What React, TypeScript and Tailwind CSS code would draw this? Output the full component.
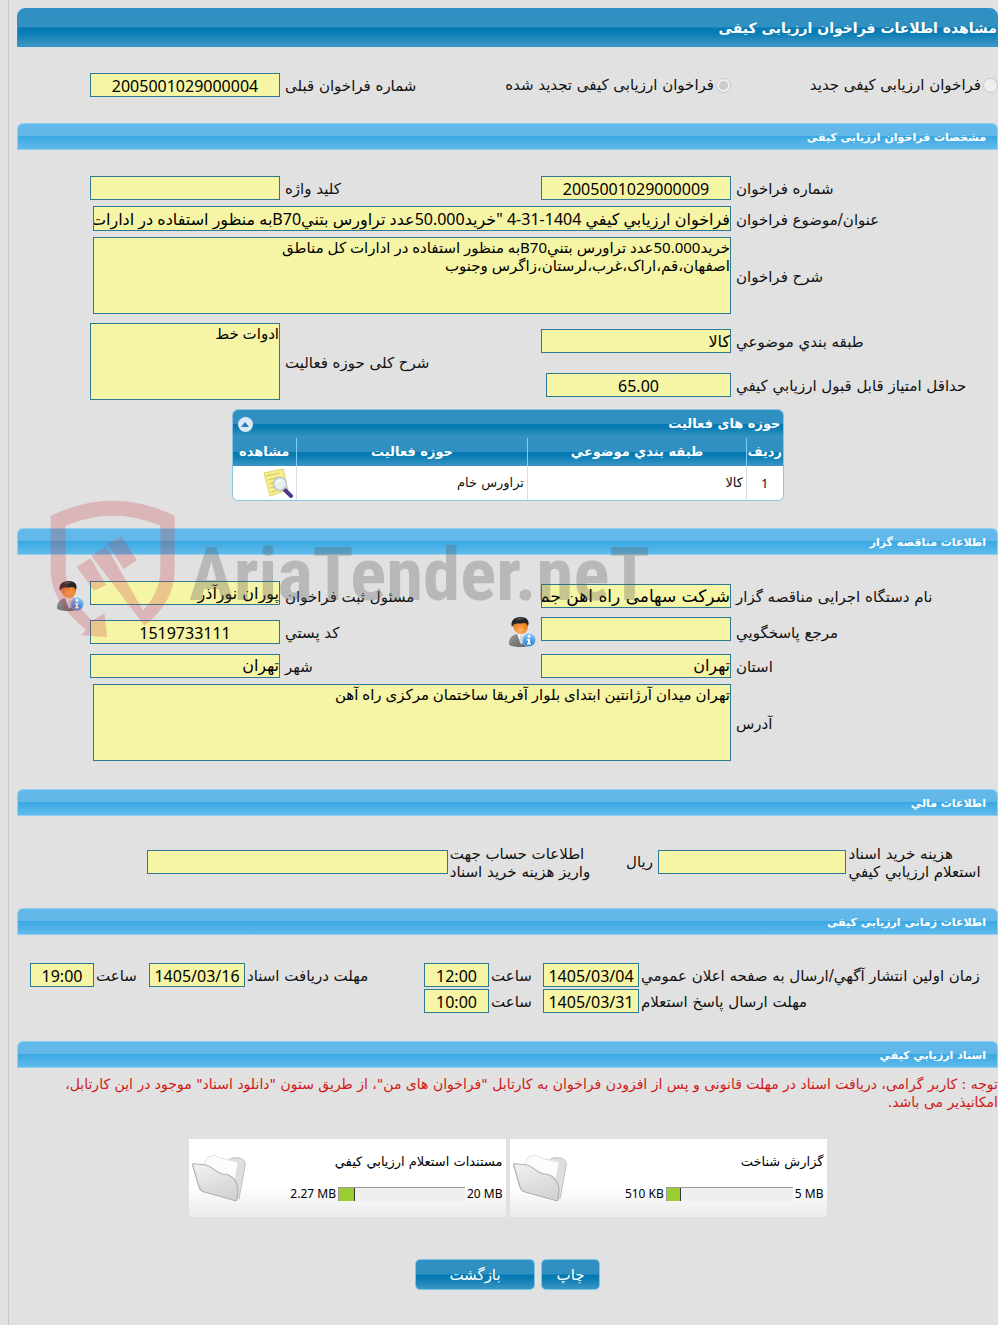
import type { ComponentProps, ReactNode } from 'react';
import { clsx } from 'clsx';

const fieldStyle =
  "block w-full min-w-0 rounded-none border border-[#2b7a91] bg-[#f6f4a5] text-black outline-none";

const fieldSizes = {
  numeric: "h-6 pt-[2px] text-center text-[16px] font-['Noto_Sans','DejaVu_Sans',sans-serif]",
  normal: "h-6 text-[16px] font-['DejaVu_Sans',sans-serif]",
  large: "h-6 text-[17px] font-['DejaVu_Sans',sans-serif]",
  mixed: "h-[25px] text-[16px] font-['Noto_Sans','DejaVu_Sans',sans-serif]",
};

function TextField({ kind = 'normal', className, ...props }: ComponentProps<'input'> & { kind?: keyof typeof fieldSizes }) {
  return <input type="text" readOnly className={clsx(fieldStyle, fieldSizes[kind], className)} {...props} />;
}

function TextBox({ className, ...props }: ComponentProps<'textarea'>) {
  return (
    <textarea
      readOnly
      className={clsx(
        fieldStyle,
        "h-[77px] resize-none text-[15px] leading-[18px] font-['Noto_Sans','DejaVu_Sans',sans-serif]",
        className,
      )}
      {...props}
    />
  );
}

function Label({ tight, ...props }: ComponentProps<'label'> & { tight?: boolean }) {
  return <label className={clsx('whitespace-nowrap pt-[2px] text-end', tight ? 'pe-[2px]' : 'pe-[5px]')} {...props} />;
}

function SectionTitle({ children }: { children: ReactNode }) {
  return (
    <h2 className="flex h-[27px] items-center rounded-t-md border border-[#8fd0f0] bg-[linear-gradient(#62b9e9_0%,#62b9e9_48%,#3ba8e2_50%,#60bbeb_100%)] px-[11px] pt-[2px] text-[11px] font-bold text-white">
      {children}
    </h2>
  );
}

function PersonInfoIcon({ id }: { id: string }) {
  return (
    <svg width="28" height="30" viewBox="0 0 28 30" aria-hidden="true">
      <defs>
        <linearGradient id={`${id}-coat`} x1="0" y1="0" x2="1" y2="1">
          <stop offset="0" stopColor="#9a9a9a" />
          <stop offset="1" stopColor="#5a5a5a" />
        </linearGradient>
        <radialGradient id={`${id}-face`} cx=".5" cy=".75" r=".7">
          <stop offset="0" stopColor="#ffb45c" />
          <stop offset="1" stopColor="#e06a10" />
        </radialGradient>
        <linearGradient id={`${id}-info`} x1="0" y1="0" x2="0" y2="1">
          <stop offset="0" stopColor="#8fcbfa" />
          <stop offset="1" stopColor="#1d78d0" />
        </linearGradient>
      </defs>
      <path d="M1 27c0-6 3-9 8-10l4 2 5-2c4 1 6 4 6 9 0 3-4 4-11 4S1 29 1 27Z" fill={`url(#${id}-coat)`} />
      <path d="m9 17 4 10 5-10-4 1Z" fill="#f4f4f8" />
      <path d="m12.500 18-1 6 2 4 2-4-1-6Z" fill="#d4d9e4" />
      <path d="M5 8c0-4 3-6 8-6s7 3 7 6c0 6-3 9-7 9s-8-4-8-9Z" fill={`url(#${id}-face)`} />
      <path d="M4 10C2 4 6 0 13 0c6 0 9 4 7 9-1-2-2-3-4-3-4 1-7 0-9 1-2 0-2 2-3 3Z" fill="#262626" />
      <path d="M8 3c2-2 6-2 8-1-2 0-5 0-8 1Z" fill="#777" />
      <circle cx="21" cy="23" r="6.500" fill={`url(#${id}-info)`} stroke="#a9d5f6" strokeWidth=".7" />
      <circle cx="21" cy="19.500" r="1.400" fill="#fff" />
      <path d="M19 22h3v4h1v1.500h-4V26h1v-2.500h-1Z" fill="#fff" />
    </svg>
  );
}

function NoteSearchIcon() {
  return (
    <svg width="30" height="30" viewBox="0 0 30 30" aria-hidden="true">
      <path d="m1 5 19-4 5 21-18 6Z" fill="#f5ef8c" stroke="#d8cc52" strokeWidth=".8" />
      <path d="m3.500 8 13-3M5 12l12-3M6 16l7-2M7 20l5-1.500M8.500 24l5-1.500" stroke="#cfc56a" strokeWidth="1.200" />
      <path d="m21 21 7 7" stroke="#4a3a8c" strokeWidth="4" strokeLinecap="round" />
      <circle cx="17" cy="16" r="6.500" fill="#e6effa" fillOpacity=".9" stroke="#b9c3d6" strokeWidth="1.400" />
      <path d="M13 15c1-2 3-3 5-2" stroke="#fff" strokeWidth="1.500" fill="none" />
    </svg>
  );
}

function FolderIcon({ id }: { id: string }) {
  return (
    <svg width="54" height="48" viewBox="0 0 54 48" aria-hidden="true">
      <defs>
        <linearGradient id={id} x1="0" y1="0" x2=".4" y2="1">
          <stop offset="0" stopColor="#f2f2f2" />
          <stop offset="1" stopColor="#d4d4d4" />
        </linearGradient>
      </defs>
      <path d="M36 8c1-4 5-5 10-4 5 0 8 3 7 8l-6 33-8-6Z" fill="#dedede" stroke="#c0c0c0" />
      <path d="m11 11 5-8 6-2 6 3 18 4-5 30-26-5Z" fill="#fcfcfc" stroke="#e2e2e2" />
      <path
        d="M1 12c-1-2 0-3 3-2l10 1c8 2 9 8 17 9 8 0 14 6 15 15l-1 10c0 2-2 2-4 1L12 38c-3-1-4-2-5-5Z"
        fill={`url(#${id})`}
        stroke="#b0b0b0"
        strokeWidth="1.200"
      />
    </svg>
  );
}

function Watermark() {
  return (
    <div
      dir="ltr"
      aria-hidden="true"
      className="pointer-events-none absolute -top-[29px] left-8 flex items-start whitespace-nowrap"
    >
      <svg width="128" height="140" viewBox="55 25 385 420" fill="#c83c46" fillOpacity=".26">
        <path d="M60 75Q247-15 433 75v160c0 75-38 130-91 170L182 195l46-28 110 193c32-35 52-75 52-125V105q-143-60-285 0v130c0 60 35 110 80 155l37-22 8 72-78-6 14-16C100 360 60 310 60 235Z" />
        <path d="m138 228 42-25 47 80-37 17ZM230 160l42-22 48 70-40 27Z" />
      </svg>
      <span className="ml-3 mt-[30px] text-[75px] font-bold leading-[90px] text-[#5a5a5a]/30 font-['Roboto_Condensed','Liberation_Sans_Narrow','DejaVu_Sans_Condensed',sans-serif]">
        AriaTender.neT
      </span>
    </div>
  );
}

const documents = [
  { id: 'report', title: 'گزارش شناخت', limit: '5 MB', used: '510 KB', percent: 11 },
  { id: 'inquiry', title: 'مستندات استعلام ارزيابي کيفي', limit: '20 MB', used: '2.27 MB', percent: 13 },
];

const formRow = 'grid grid-cols-[267fr_190fr_261fr_190fr_73fr] items-center';
const timeRow = 'grid grid-cols-[359fr_96fr_54fr_65fr_179fr_96fr_55fr_64fr_13fr] items-center';
const darkBar = 'bg-[linear-gradient(#2f90c1_0%,#2f90c1_49%,#0278b1_51%,#0b7db4_65%,#3c97c4_100%)]';

export default function App() {
  return (
    <div dir="rtl" lang="fa" className="min-h-screen overflow-x-hidden bg-[#e1e1e1] pl-2 text-[15px] leading-[18px] text-[#111] font-['DejaVu_Sans',sans-serif]">
      <main className="min-h-screen border-l border-[#c8c8c8] pb-8 pl-2 pt-2">
        <h1 className={`flex h-[39px] items-center rounded-t-lg border border-[#3490cc] text-[14px] font-bold text-white ${darkBar}`}>
          مشاهده اطلاعات فراخوان ارزیابی کیفی
        </h1>

        <div className="grid grid-cols-[267fr_260fr_191fr_190fr_73fr] items-center py-[26px]">
          <label className="flex items-center gap-[2px] whitespace-nowrap">
            <input type="radio" name="kind" disabled className="size-[15px] shrink-0" />
            فراخوان ارزیابی کیفی جدید
          </label>
          <label className="flex items-center gap-[2px] whitespace-nowrap">
            <input type="radio" name="kind" disabled defaultChecked className="size-[15px] shrink-0" />
            فراخوان ارزیابی کیفی تجدید شده
          </label>
          <Label htmlFor="prev">شماره فراخوان قبلی</Label>
          <TextField id="prev" kind="numeric" defaultValue="2005001029000004" />
        </div>

        <SectionTitle>مشخصات فراخوان ارزیابی کیفی</SectionTitle>
        <section className="flex flex-col gap-[6px] pb-[27px] pt-[26px]">
          <div className={formRow}>
            <Label htmlFor="number">شماره فراخوان</Label>
            <TextField id="number" kind="numeric" defaultValue="2005001029000009" />
            <Label htmlFor="keyword">کلید واژه</Label>
            <TextField id="keyword" />
          </div>
          <div className={formRow}>
            <Label htmlFor="subject">عنوان/موضوع فراخوان</Label>
            <div className="col-span-3 pe-[3px]">
              <TextField
                id="subject"
                kind="mixed"
                defaultValue={'فراخوان ارزيابي کيفي 1404-31-4 "خريد50.000عدد تراورس بتنيB70به منظور استفاده در ادارات کل مناطق"'}
              />
            </div>
          </div>
          <div className={formRow}>
            <Label htmlFor="description">شرح فراخوان</Label>
            <div className="col-span-3 pe-[3px]">
              <TextBox
                id="description"
                defaultValue={'خريد50.000عدد تراورس بتنيB70به منظور استفاده در ادارات کل مناطق\nاصفهان،قم،اراک،غرب،لرستان،زاگرس وجنوب'}
              />
            </div>
          </div>
          <div className={`${formRow} mt-[3px]`}>
            <div className="col-span-2 flex h-full flex-col justify-between pb-[3px] pt-[6px]">
              <div className="grid grid-cols-[267fr_190fr] items-center">
                <Label htmlFor="category">طبقه بندي موضوعي</Label>
                <TextField id="category" defaultValue="کالا" />
              </div>
              <div className="grid grid-cols-[267fr_190fr] items-center">
                <Label htmlFor="score">حداقل امتياز قابل قبول ارزيابي کيفي</Label>
                <div className="pe-[5px]">
                  <TextField id="score" kind="numeric" defaultValue="65.00" />
                </div>
              </div>
            </div>
            <Label htmlFor="field">شرح کلی حوزه فعالیت</Label>
            <TextBox id="field" defaultValue="ادوات خط" />
          </div>

          <div className="mx-auto mt-[3px] w-[552px] max-w-full overflow-hidden rounded-md border border-[#8cc4e4] bg-white">
            <div className={`flex h-7 items-center justify-between px-[2px] text-[13px] font-bold text-white ${darkBar}`}>
              <span>حوزه های فعالیت</span>
              <button type="button" aria-label="بستن" className="ml-[3px] flex size-[15px] items-center justify-center rounded-full bg-[#d9e9f8]">
                <svg width="8" height="5" viewBox="0 0 8 5" aria-hidden="true">
                  <path d="M4 0 8 5H0Z" fill="#2b7db5" />
                </svg>
              </button>
            </div>
            <table className="w-full table-fixed border-collapse text-[13px]">
              <colgroup>
                <col className="w-[36px]" />
                <col className="w-[219px]" />
                <col />
                <col className="w-[64px]" />
              </colgroup>
              <thead>
                <tr className={`h-7 text-white ${darkBar}`}>
                  <th className="whitespace-nowrap">ردیف</th>
                  <th className="border-r border-[#7cd0f5]">طبقه بندي موضوعي</th>
                  <th className="border-r border-[#7cd0f5]">حوزه فعاليت</th>
                  <th className="border-r border-[#7cd0f5]">مشاهده</th>
                </tr>
              </thead>
              <tbody>
                <tr className="h-[34px]">
                  <td className="text-center font-['Noto_Sans',sans-serif]">1</td>
                  <td className="border-r border-[#d5dde2] px-[3px]">کالا</td>
                  <td className="border-r border-[#d5dde2] px-[3px]">تراورس خام</td>
                  <td className="border-r border-[#d5dde2] px-[3px]">
                    <button type="button" aria-label="مشاهده" className="block">
                      <NoteSearchIcon />
                    </button>
                  </td>
                </tr>
              </tbody>
            </table>
          </div>
        </section>

        <div className="relative">
          <SectionTitle>اطلاعات مناقصه گزار</SectionTitle>
          <section className="flex flex-col gap-[6px] pb-7 pt-[26px]">
            <div className={formRow}>
              <Label htmlFor="agency">نام دستگاه اجرایی مناقصه گزار</Label>
              <TextField id="agency" kind="large" defaultValue="شرکت سهامی راه اهن جمهوری اسلامی ایران" />
              <Label htmlFor="registrar">مسئول ثبت فراخوان</Label>
              <TextField id="registrar" className="self-start" defaultValue="پوران نورآذر" />
              <button type="button" aria-label="اطلاعات مسئول" className="ms-[6px] justify-self-start">
                <PersonInfoIcon id="registrar-icon" />
              </button>
            </div>
            <div className={formRow}>
              <Label htmlFor="contact">مرجع پاسخگويي</Label>
              <TextField id="contact" className="self-start" />
              <div className="flex items-center justify-between">
                <button type="button" aria-label="اطلاعات مرجع" className="ms-[5px]">
                  <PersonInfoIcon id="contact-icon" />
                </button>
                <Label htmlFor="postal">کد پستي</Label>
              </div>
              <TextField id="postal" kind="numeric" defaultValue="1519733111" />
            </div>
            <div className={`${formRow} min-h-[25px]`}>
              <Label htmlFor="province">استان</Label>
              <TextField id="province" defaultValue="تهران" />
              <Label htmlFor="city">شهر</Label>
              <TextField id="city" defaultValue="تهران" />
            </div>
            <div className={formRow}>
              <Label htmlFor="address">آدرس</Label>
              <div className="col-span-3 pe-[3px]">
                <TextBox id="address" defaultValue="تهران میدان آرژانتین ابتدای بلوار آفریقا ساختمان مرکزی راه آهن" />
              </div>
            </div>
          </section>
          <Watermark />
        </div>

        <SectionTitle>اطلاعات مالي</SectionTitle>
        <section className="grid grid-cols-[152fr_189fr_68fr_140fr_302fr_130fr] items-center py-[27px]">
          <Label htmlFor="fee" tight>
            هزینه خرید اسناد
            <br />
            استعلام ارزيابي کيفي
          </Label>
          <TextField id="fee" />
          <span className="ps-[5px]">ریال</span>
          <Label htmlFor="account" tight>
            اطلاعات حساب جهت
            <br />
            واریز هزینه خرید اسناد
          </Label>
          <TextField id="account" />
        </section>

        <SectionTitle>اطلاعات زمانی ارزیابی کیفی</SectionTitle>
        <section className="flex flex-col gap-[2px] py-7">
          <div className={timeRow}>
            <Label htmlFor="publish" tight>زمان اولين انتشار آگهي/ارسال به صفحه اعلان عمومي</Label>
            <TextField id="publish" kind="numeric" defaultValue="1405/03/04" />
            <Label htmlFor="publish-hour" tight>ساعت</Label>
            <TextField id="publish-hour" kind="numeric" defaultValue="12:00" />
            <Label htmlFor="receive" tight>مهلت دریافت اسناد</Label>
            <TextField id="receive" kind="numeric" defaultValue="1405/03/16" />
            <Label htmlFor="receive-hour" tight>ساعت</Label>
            <TextField id="receive-hour" kind="numeric" defaultValue="19:00" />
          </div>
          <div className={timeRow}>
            <Label htmlFor="reply" tight>مهلت ارسال پاسخ استعلام</Label>
            <TextField id="reply" kind="numeric" defaultValue="1405/03/31" />
            <Label htmlFor="reply-hour" tight>ساعت</Label>
            <TextField id="reply-hour" kind="numeric" defaultValue="10:00" />
          </div>
        </section>

        <SectionTitle>اسناد ارزيابي کيفي</SectionTitle>
        <p className="pt-[7px] text-[14px] leading-[18px] text-[#d01818]">
          توجه : کاربر گرامی، دریافت اسناد در مهلت قانونی و پس از افزودن فراخوان به کارتابل "فراخوان های من"، از طریق ستون "دانلود اسناد" موجود در این کارتابل، امکانپذیر می باشد.
        </p>

        <div className="mt-7 flex flex-wrap justify-center gap-1">
          {documents.map((doc) => (
            <article key={doc.id} className="flex h-[78px] w-[317px] items-center justify-between bg-[linear-gradient(#fff_0%,#fff_60%,#ebebeb_100%)] px-[3px] text-[12px] text-black">
              <div className="flex flex-col gap-[14px]">
                <h3 className="text-[13px]">{doc.title}</h3>
                <div className="flex items-center gap-[2px] font-['Noto_Sans',sans-serif]">
                  <span dir="ltr">{doc.limit}</span>
                  <div dir="ltr" className="h-[14px] w-[127px] border-t border-l border-[#999] bg-[#efefef]">
                    <div className="h-full border-r border-[#333] bg-[#9acd32]" style={{ width: `${doc.percent}%` }} />
                  </div>
                  <span dir="ltr">{doc.used}</span>
                </div>
              </div>
              <FolderIcon id={`folder-${doc.id}`} />
            </article>
          ))}
        </div>

        <div className="mt-[42px] flex justify-center gap-[6px] text-white">
          <button type="button" className={`h-[31px] w-[59px] rounded-[5px] border border-[#7cc4e8] ${darkBar}`}>
            چاپ
          </button>
          <button type="button" className={`h-[31px] w-[120px] rounded-[5px] border border-[#7cc4e8] ${darkBar}`}>
            بازگشت
          </button>
        </div>
      </main>
    </div>
  );
}
